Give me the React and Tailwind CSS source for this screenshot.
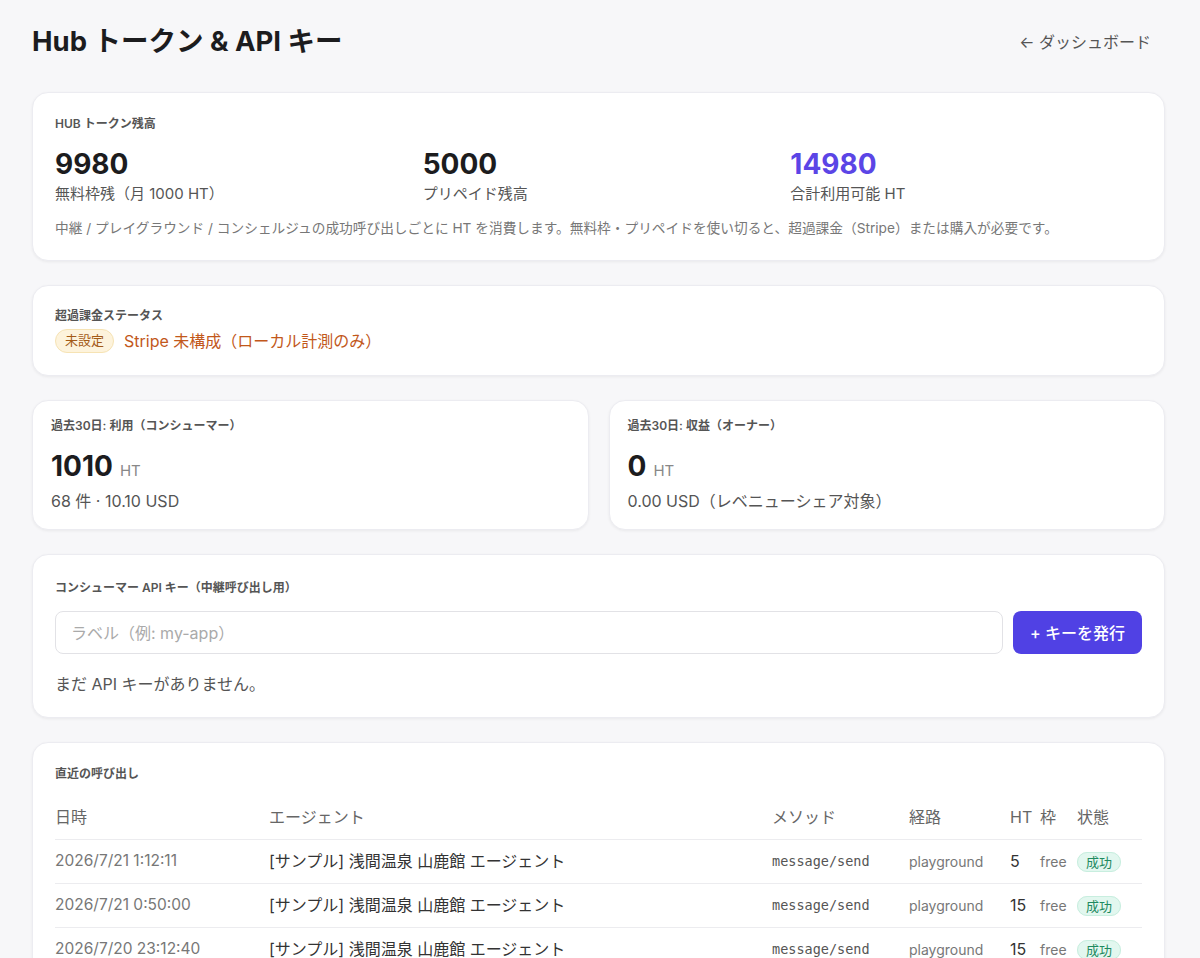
import React from "react";

const rows = [
  { date: "2026/7/21 1:12:11", ht: 5 },
  { date: "2026/7/21 0:50:00", ht: 15 },
  { date: "2026/7/20 23:12:40", ht: 15 },
];

const Card = ({ className = "", children }) => (
  <div
    className={`bg-white rounded-2xl border border-[#ececf1] shadow-[0_1px_3px_rgba(0,0,0,0.06)] ${className}`}
  >
    {children}
  </div>
);

export default function App() {
  return (
    <div
      className="min-h-screen bg-[#f7f7f9] text-[#1c1c1e]"
      style={{ fontFamily: 'Inter, "Noto Sans CJK JP", sans-serif' }}
    >
      <div className="pl-8 pr-[35px] pt-6 pb-10">
        <div className="flex items-center justify-between h-[36px]">
          <h1 className="text-[27.5px] font-bold">Hub トークン &amp; API キー</h1>
          <a className="text-[16px] text-[#555] pl-4 pr-[14px]">← ダッシュボード</a>
        </div>

        <div className="mt-[32px] flex flex-col gap-6">
          <Card className="px-[22px] pt-[22px] pb-[22px]">
            <div className="text-[12px] font-semibold text-[#555]">HUB トークン残高</div>
            <div className="grid grid-cols-3 gap-4 mt-[13px]">
              <div>
                <div className="text-[28px] font-bold leading-[36px]">9980</div>
                <div className="text-[15px] text-[#555] mt-[1px]">無料枠残（月 1000 HT）</div>
              </div>
              <div>
                <div className="text-[28px] font-bold leading-[36px]">5000</div>
                <div className="text-[15px] text-[#555] mt-[1px]">プリペイド残高</div>
              </div>
              <div>
                <div className="text-[28px] font-bold leading-[36px] text-[#5b45e6]">14980</div>
                <div className="text-[15px] text-[#555] mt-[1px]">合計利用可能 HT</div>
              </div>
            </div>
            <p className="text-[13.7px] text-[#777] mt-[12px]">
              中継 / プレイグラウンド / コンシェルジュの成功呼び出しごとに HT を消費します。無料枠・プリペイドを使い切ると、超過課金（Stripe）または購入が必要です。
            </p>
          </Card>

          <Card className="px-[22px] pt-[21px] pb-[22px]">
            <div className="text-[12px] font-semibold text-[#555]">超過課金ステータス</div>
            <div className="flex items-center gap-[10px] mt-[4px]">
              <span className="text-[13px] px-[9px] py-[1px] rounded-full bg-[#fdf3dc] border border-[#f6e3b4] text-[#a35a16]">
                未設定
              </span>
              <span className="text-[16px] text-[#c2581b]">Stripe 未構成（ローカル計測のみ）</span>
            </div>
          </Card>

          <div className="grid grid-cols-2 gap-5">
            <Card className="px-[18px] pt-[16px] pb-[16px]">
              <div className="text-[12px] font-semibold text-[#555]">過去30日: 利用（コンシューマー）</div>
              <div className="flex items-baseline gap-[7px] mt-[13px]">
                <span className="text-[28px] font-bold leading-[36px]">1010</span>
                <span className="text-[15px] text-[#888]">HT</span>
              </div>
              <div className="text-[16px] text-[#555] mt-[5px]">68 件 · 10.10 USD</div>
            </Card>
            <Card className="px-[18px] pt-[16px] pb-[16px]">
              <div className="text-[12px] font-semibold text-[#555]">過去30日: 収益（オーナー）</div>
              <div className="flex items-baseline gap-[7px] mt-[13px]">
                <span className="text-[28px] font-bold leading-[36px]">0</span>
                <span className="text-[15px] text-[#888]">HT</span>
              </div>
              <div className="text-[16px] text-[#555] mt-[5px]">0.00 USD（レベニューシェア対象）</div>
            </Card>
          </div>

          <Card className="px-[22px] pt-[24px] pb-[21px]">
            <div className="text-[12px] font-semibold text-[#555]">コンシューマー API キー（中継呼び出し用）</div>
            <div className="flex items-center gap-[10px] mt-[14px]">
              <input
                className="flex-1 h-[43px] rounded-lg border border-[#e2e2e6] px-[15px] text-[16px] placeholder:text-[#aaa] outline-none"
                placeholder="ラベル（例: my-app）"
              />
              <button className="h-[43px] px-[17px] rounded-lg bg-[#5041e4] text-white text-[16px] font-medium">
                + キーを発行
              </button>
            </div>
            <div className="text-[16px] text-[#555] mt-[18px]">まだ API キーがありません。</div>
          </Card>

          <Card className="px-[22px] pt-[22px] pb-2">
            <div className="text-[12px] font-semibold text-[#555]">直近の呼び出し</div>
            <table className="w-full mt-[12px] text-left">
              <thead>
                <tr className="text-[16px] text-[#666] border-b border-[#ececef]">
                  <th className="font-normal h-[44px] w-[214px]">日時</th>
                  <th className="font-normal">エージェント</th>
                  <th className="font-normal w-[137px]">メソッド</th>
                  <th className="font-normal w-[101px]">経路</th>
                  <th className="font-normal w-[30px]">HT</th>
                  <th className="font-normal w-[37px]">枠</th>
                  <th className="font-normal w-[65px]">状態</th>
                </tr>
              </thead>
              <tbody>
                {rows.map((r, i) => (
                  <tr key={i} className="border-b border-[#ececef]">
                    <td className="h-[44px] text-[15.5px] text-[#777]">{r.date}</td>
                    <td className="text-[16px] text-[#333]">[サンプル] 浅間温泉 山鹿館 エージェント</td>
                    <td
                      className="text-[13.5px] text-[#555]"
                      style={{ fontFamily: '"DejaVu Sans Mono", monospace' }}
                    >
                      message/send
                    </td>
                    <td className="text-[14px] text-[#777]">playground</td>
                    <td className="text-[16px] text-[#333]">{r.ht}</td>
                    <td className="text-[14px] text-[#777]">free</td>
                    <td>
                      <span className="text-[13px] px-[8px] py-[1px] rounded-full bg-[#e2f7ef] border border-[#c8eedf] text-[#1f8a60]">
                        成功
                      </span>
                    </td>
                  </tr>
                ))}
              </tbody>
            </table>
          </Card>
        </div>
      </div>
    </div>
  );
}
